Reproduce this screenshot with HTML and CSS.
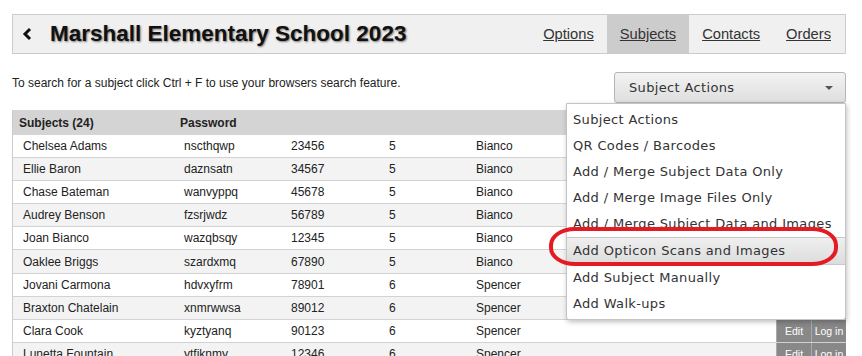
FILE: index.html
```html
<!DOCTYPE html>
<html lang="en">
<head>
    <meta charset="UTF-8">
    <title>Marshall Elementary School 2023 - Subjects</title>
    <link rel="stylesheet" href="styles.css">
</head>
<body>
    <div class="page">
        <div class="header">
            <a class="back" href="#">
                <svg width="12" height="14" viewBox="0 0 12 14"><polyline points="8,2 3,7 8,12" fill="none" stroke="#111" stroke-width="3"/></svg>
            </a>
            <h1>Marshall Elementary School 2023</h1>
            <nav class="nav">
                <a href="#">Options</a>
                <a href="#" class="active">Subjects</a>
                <a href="#">Contacts</a>
                <a href="#">Orders</a>
            </nav>
        </div>

        <div class="toolbar">
            <p class="hint">To search for a subject click Ctrl + F to use your browsers search feature.</p>
            <div class="actions">
                <div class="select">
                    <span>Subject Actions</span>
                    <span class="caret"></span>
                </div>
                <ul class="menu">
                    <li>Subject Actions</li>
                    <li>QR Codes / Barcodes</li>
                    <li>Add / Merge Subject Data Only</li>
                    <li>Add / Merge Image Files Only</li>
                    <li>Add / Merge Subject Data and Images</li>
                    <li class="hover">Add Opticon Scans and Images</li>
                    <li>Add Subject Manually</li>
                    <li>Add Walk-ups</li>
                </ul>
                <div class="circle"></div>
            </div>
        </div>

        <div class="grid">
            <div class="row head">
                <div>Subjects (24)</div><div>Password</div><div></div><div></div><div></div><div></div><div></div>
            </div>
            <div class="row"><div>Chelsea Adams</div><div>nscthqwp</div><div>23456</div><div>5</div><div>Bianco</div><div class="btn">Edit</div><div class="btn">Log in</div></div>
            <div class="row"><div>Ellie Baron</div><div>daznsatn</div><div>34567</div><div>5</div><div>Bianco</div><div class="btn">Edit</div><div class="btn">Log in</div></div>
            <div class="row"><div>Chase Bateman</div><div>wanvyppq</div><div>45678</div><div>5</div><div>Bianco</div><div class="btn">Edit</div><div class="btn">Log in</div></div>
            <div class="row"><div>Audrey Benson</div><div>fzsrjwdz</div><div>56789</div><div>5</div><div>Bianco</div><div class="btn">Edit</div><div class="btn">Log in</div></div>
            <div class="row"><div>Joan Bianco</div><div>wazqbsqy</div><div>12345</div><div>5</div><div>Bianco</div><div class="btn">Edit</div><div class="btn">Log in</div></div>
            <div class="row"><div>Oaklee Briggs</div><div>szardxmq</div><div>67890</div><div>5</div><div>Bianco</div><div class="btn">Edit</div><div class="btn">Log in</div></div>
            <div class="row"><div>Jovani Carmona</div><div>hdvxyfrm</div><div>78901</div><div>6</div><div>Spencer</div><div class="btn">Edit</div><div class="btn">Log in</div></div>
            <div class="row"><div>Braxton Chatelain</div><div>xnmrwwsa</div><div>89012</div><div>6</div><div>Spencer</div><div class="btn">Edit</div><div class="btn">Log in</div></div>
            <div class="row"><div>Clara Cook</div><div>kyztyanq</div><div>90123</div><div>6</div><div>Spencer</div><div class="btn">Edit</div><div class="btn">Log in</div></div>
            <div class="row"><div>Lunetta Fountain</div><div>ytfiknmy</div><div>12346</div><div>6</div><div>Spencer</div><div class="btn">Edit</div><div class="btn">Log in</div></div>
        </div>
    </div>
</body>
</html>
```

FILE: styles.css
```css
body {
    margin: 0;
    font-family: "Liberation Sans", Arial, sans-serif;
    color: #222;
    background: #fff;
}
.page {
    padding: 14px 16px 0 12px;
}
.header {
    display: flex;
    align-items: stretch;
    height: 38px;
    background: #f0f0f0;
    border: 1px solid #ccc;
}
.back {
    display: flex;
    align-items: center;
    padding: 0 0 0 9px;
    width: 28px;
}
.header h1 {
    margin: 0;
    flex: 1;
    align-self: center;
    font-size: 22.5px;
    font-weight: bold;
    color: #111;
    text-shadow: 1px 1px 2px #777;
}
.nav {
    display: flex;
    padding-right: 1px;
}
.nav a {
    display: flex;
    align-items: center;
    padding: 0 13px;
    font-size: 14.7px;
    color: #333;
}
.nav a.active {
    background: #ccc;
}
.toolbar {
    display: flex;
    justify-content: space-between;
    align-items: flex-start;
    margin-top: 18px;
}
.hint {
    margin: 4px 0 0;
    font-size: 12px;
    color: #222;
}
.actions {
    position: relative;
    width: 232px;
}
.select {
    display: flex;
    justify-content: space-between;
    align-items: center;
    height: 29px;
    padding: 0 12px 0 14px;
    border: 1px solid #b5b5b5;
    border-radius: 3px;
    background: linear-gradient(#f3f3f3, #dedede);
    font-family: "DejaVu Sans", Verdana, sans-serif;
    font-size: 13px;
    letter-spacing: 0.35px;
    color: #333;
}
.caret {
    width: 0;
    height: 0;
    border-left: 4px solid transparent;
    border-right: 4px solid transparent;
    border-top: 4px solid #555;
}
.menu {
    position: absolute;
    top: 31px;
    right: 0;
    width: 278px;
    margin: 0;
    padding: 3px 0 2px;
    list-style: none;
    background: #fff;
    border: 1px solid #c4c4c4;
    border-radius: 0 0 3px 3px;
    box-shadow: 1px 2px 5px rgba(0, 0, 0, 0.25);
    font-family: "DejaVu Sans", Verdana, sans-serif;
    font-size: 13px;
    letter-spacing: 0.35px;
    color: #333;
    z-index: 2;
}
.menu li {
    height: 26px;
    line-height: 26px;
    padding: 0 6px;
    white-space: nowrap;
}
.menu li.hover {
    background: linear-gradient(#efefef, #dcdcdc);
    border-top: 1px solid #c8c8c8;
    border-bottom: 1px solid #c8c8c8;
}
.circle {
    position: absolute;
    top: 155px;
    left: -65px;
    width: 281px;
    height: 31px;
    border: 4px solid #e31b23;
    border-radius: 26px / 18px;
    z-index: 3;
}
.grid {
    margin-top: 7px;
    border-left: 1px solid #ccc;
    font-size: 12px;
}
.row {
    display: grid;
    grid-template-columns: 161px 107px 98px 87px 1fr 35px 35px;
    height: 22.1px;
    border-bottom: 1px solid #d2d2d2;
    align-items: center;
}
.row > div {
    padding-left: 10px;
}
.row:nth-child(odd) {
    background: #f3f3f3;
}
.row.head {
    height: 25px;
    background: #d4d4d4;
    font-weight: bold;
    border-bottom: 0;
}
.row.head > div {
    padding-left: 6px;
}
.row > .btn {
    align-self: stretch;
    display: flex;
    align-items: center;
    justify-content: center;
    padding: 0;
    background: #888;
    color: #fff;
    font-size: 10.5px;
    border-left: 1px solid #aaa;
}
```
